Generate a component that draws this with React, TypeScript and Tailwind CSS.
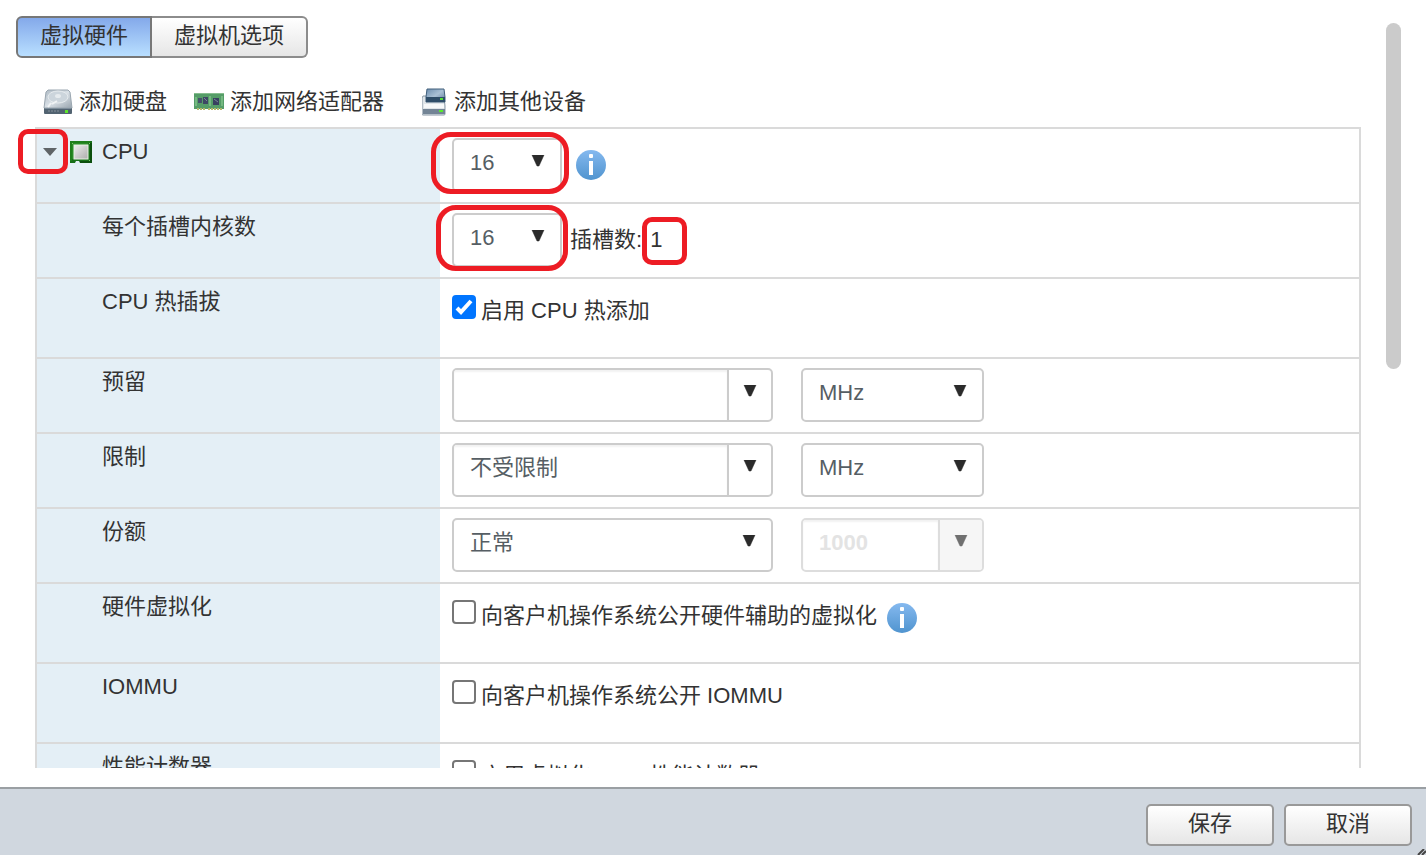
import React, { PropsWithChildren } from 'react';

interface MarkProps {
  className: string;
}

interface RowProps {
  label: string;
  icon?: React.ReactNode;
  htmlFor?: string;
  tall?: boolean;
}

interface SelectProps {
  id?: string;
  label?: string;
  options: string[];
  className: string;
}

interface ComboProps {
  id?: string;
  label?: string;
  value?: string;
  disabled?: boolean;
  className: string;
}

interface CheckProps {
  id: string;
  label: string;
  checked?: boolean;
}

const DiskIcon = () => (
  <svg width="30" height="28" viewBox="0 0 30 28" aria-hidden="true">
    <defs>
      <linearGradient id="diskTop" x1="0" y1="0" x2="1" y2="1">
        <stop offset="0" stopColor="#aebac4" />
        <stop offset="0.5" stopColor="#d9e0e6" />
        <stop offset="1" stopColor="#98a4ae" />
      </linearGradient>
    </defs>
    <path d="M5 2h20l2 2 2 16H1L3 4z" fill="url(#diskTop)" stroke="#9aa6b0" />
    <ellipse cx="15" cy="9" rx="10" ry="6" fill="#ccd5dc" stroke="#e6ebee" />
    <ellipse cx="15" cy="8" rx="3" ry="2" fill="#e6ebee" />
    <path d="M8 15l-3 4M9 16l5-3" stroke="#f0f3f5" strokeWidth="2" />
    <rect x="1" y="20" width="28" height="6" rx="1" fill="#526371" />
    <path d="M2 20.5h26" stroke="#7e8e9b" />
    <path d="M5 23h12" stroke="#6b7a86" strokeWidth="2" strokeDasharray="2 1" />
    <rect x="22" y="22" width="3" height="3" fill="#5ee42c" />
  </svg>
);

const NetworkCardIcon = () => (
  <svg width="30" height="20" viewBox="0 0 30 20" aria-hidden="true">
    <rect width="30" height="16" y="1" fill="#559d68" />
    <path d="M0 1.5h30" stroke="#86bd8e" />
    <path d="M3 17h8M14 17h15" stroke="#b3b86c" strokeWidth="2" strokeDasharray="2 1" />
    <path d="M2 5v9M16 4v10M28 4v10" stroke="#75b981" strokeWidth="2" />
    <rect x="4" y="6" width="4" height="5" fill="#45516a" />
    <rect x="9" y="5" width="5" height="7" fill="#3d4864" />
    <rect x="19" y="6" width="6" height="7" fill="#37405f" />
    <path d="M10 6l3 3M20 7l4 3" stroke="#7a849b" />
  </svg>
);

const DeviceIcon = () => (
  <svg width="24" height="28" viewBox="0 0 24 28" aria-hidden="true">
    <defs>
      <linearGradient id="deviceTop" x1="0" y1="0" x2="1" y2="1">
        <stop offset="0" stopColor="#6d8eaf" />
        <stop offset="0.5" stopColor="#a9c0d5" />
        <stop offset="1" stopColor="#577694" />
      </linearGradient>
    </defs>
    <path d="M1 8h21l1 10v8a1 1 0 0 1-1 1H1a1 1 0 0 1-1-1V10z" fill="#dfe5e9" stroke="#8998a5" />
    <path d="M5 1h17l1 8v5H4V9z" fill="url(#deviceTop)" stroke="#405f7b" />
    <rect x="4" y="9" width="19" height="5" fill="#2e4d69" />
    <path d="M1 21h22v5H1z" fill="#738495" />
    <path d="M2 18h20" stroke="#f7f9fa" strokeWidth="4" />
    <rect x="18" y="10" width="3" height="2" fill="#56dd38" />
    <rect x="17" y="22" width="4" height="2" fill="#56ee2c" />
  </svg>
);

const CpuIcon = () => (
  <svg width="22" height="22" viewBox="0 0 22 22" aria-hidden="true">
    <defs>
      <linearGradient id="cpuDie" x1="0" y1="0" x2="1" y2="1">
        <stop offset="0" stopColor="#eeeeee" />
        <stop offset="1" stopColor="#adadad" />
      </linearGradient>
    </defs>
    <path d="M0 0h22v22H10l-1-2H6l-1 2H0z" fill="#176f18" />
    <path d="M1 20V1h19" fill="none" stroke="#1f7f1b" strokeWidth="2" />
    <path d="M21 2v19H10" fill="none" stroke="#0b4f0d" strokeWidth="2" />
    <path d="M3 18V3h15" fill="none" stroke="#3fa836" />
    <rect x="4" y="4" width="14" height="14" fill="url(#cpuDie)" stroke="#e8f1e5" />
    <path d="M2 2h1v1H2zM19 2h1v1h-1zM19 19h1v1h-1z" fill="#7ecb6c" />
  </svg>
);

const InfoIcon = () => (
  <svg className="shrink-0" width="30" height="30" viewBox="0 0 30 30" role="img" aria-label="信息">
    <defs>
      <linearGradient id="infoFill" x1="0" y1="0" x2="0" y2="1">
        <stop offset="0" stopColor="#85b9ef" />
        <stop offset="1" stopColor="#5094cf" />
      </linearGradient>
    </defs>
    <circle cx="15" cy="15" r="15" fill="url(#infoFill)" />
    <rect x="13" y="4" width="4" height="4" rx="1" fill="#fff" />
    <rect x="13" y="11" width="4" height="14" fill="#fff" />
  </svg>
);

const Arrow = () => (
  <svg width="14" height="12" viewBox="0 0 14 12" aria-hidden="true">
    <path d="M1 0h12L8 11H6z" fill="currentColor" stroke="currentColor" strokeWidth="0.5" />
  </svg>
);

// red highlight drawn over the control it belongs to
const Mark = ({ className }: MarkProps) => (
  <span
    className={`pointer-events-none absolute z-10 border-5 border-[#ed1c24] ${className}`}
  />
);

const Select = ({ id, label, options, className }: SelectProps) => (
  <div className={`relative h-[54px] ${className}`}>
    <select
      id={id}
      aria-label={label}
      className="h-full w-full appearance-none rounded-[5px] border-2 border-[#cccccc] bg-white pb-1 pl-4 text-[22px] text-[#565e64]"
    >
      {options.map((option) => (
        <option key={option}>{option}</option>
      ))}
    </select>
    <span className="pointer-events-none absolute top-[17px] right-[17px] text-[#2b2b2b]">
      <Arrow />
    </span>
  </div>
);

const Combo = ({ id, label, value, disabled, className }: ComboProps) => (
  <div
    className={`flex h-[54px] overflow-hidden rounded-[5px] border-2 bg-white ${
      disabled ? 'border-[#dddddd]' : 'border-[#cccccc]'
    } ${className}`}
  >
    <input
      id={id}
      aria-label={label}
      type="text"
      defaultValue={value}
      disabled={disabled}
      className="min-w-0 flex-1 pb-1 pl-4 text-[#565e64] shadow-[inset_0_2px_2px_#f2f2f2] disabled:font-bold disabled:text-[#e3e3e3]"
    />
    <button
      type="button"
      aria-label="展开"
      disabled={disabled}
      className="flex w-11 justify-center border-l-2 border-[#cccccc] pt-[15px] text-[#2b2b2b] disabled:border-[#dddddd] disabled:bg-[#f6f6f6] disabled:text-[#707070]"
    >
      <Arrow />
    </button>
  </div>
);

const Check = ({ id, label, checked }: CheckProps) => (
  <div className="flex items-start gap-[5px]">
    <span className="relative size-6 shrink-0">
      <input
        id={id}
        type="checkbox"
        defaultChecked={checked}
        className="peer block size-6 appearance-none rounded-[4px] border-2 border-[#767676] bg-white checked:border-[#0075ff] checked:bg-[#0075ff]"
      />
      <svg
        className="pointer-events-none absolute inset-0 hidden peer-checked:block"
        width="24"
        height="24"
        viewBox="0 0 24 24"
        aria-hidden="true"
      >
        <path d="M5 13l4 4L19 6" fill="none" stroke="#fff" strokeWidth="4" />
      </svg>
    </span>
    <label htmlFor={id} className="mt-0.5">
      {label}
    </label>
  </div>
);

const Row = ({
  label,
  icon,
  htmlFor,
  tall,
  children,
}: PropsWithChildren<RowProps>) => (
  <div
    className={`flex border-t-2 border-[#dadada] ${tall ? 'min-h-20' : 'min-h-[75px]'}`}
  >
    <div className="flex w-[403px] shrink-0 items-start bg-[#e4eff6] pt-[9px]">
      <div className="flex w-[65px] shrink-0 items-center">{icon}</div>
      {htmlFor ? <label htmlFor={htmlFor}>{label}</label> : <span>{label}</span>}
    </div>
    <div
      className={`flex flex-1 items-start pl-3 ${tall ? 'pt-4' : 'pt-[9px]'}`}
    >
      {children}
    </div>
  </div>
);

const ToolButton = ({ children }: PropsWithChildren) => (
  <button type="button" className="flex items-center gap-1.5">
    {children}
  </button>
);

const FooterButton = ({ children }: PropsWithChildren) => (
  <button
    type="button"
    className="h-[42px] w-32 rounded-[5px] border-2 border-[#999999] bg-linear-to-b from-white to-[#e6e6e6] pb-0.5"
  >
    {children}
  </button>
);

const App = () => {
  return (
    <div className="flex h-screen flex-col bg-white font-['Liberation_Sans','Noto_Sans_CJK_SC',sans-serif] text-[22px] leading-7 text-[#333333]">
      <main className="flex min-h-0 flex-1 pb-[19px]">
        <div className="min-w-0 flex-1 overflow-y-auto pt-4 [scrollbar-width:none]">
          <div className="flex pl-4" role="tablist">
            <button
              type="button"
              role="tab"
              aria-selected="true"
              className="h-[42px] w-[136px] rounded-l-[6px] border-2 border-[#777777] bg-linear-to-b from-[#84a9ea] to-[#b9dfff] pb-0.5"
            >
              虚拟硬件
            </button>
            <button
              type="button"
              role="tab"
              aria-selected="false"
              className="h-[42px] w-[156px] rounded-r-[6px] border-2 border-l-0 border-[#8c8c8c] bg-linear-to-b from-white to-[#e6e6e6] pb-0.5"
            >
              虚拟机选项
            </button>
          </div>

          <div className="flex pt-[30px] pb-[11px] pl-[43px]">
            <div className="flex gap-[27px]">
              <ToolButton>
                <DiskIcon />
                添加硬盘
              </ToolButton>
              <ToolButton>
                <NetworkCardIcon />
                添加网络适配器
              </ToolButton>
            </div>
            <div className="ml-[38px]">
              <ToolButton>
                <DeviceIcon />
                <span className="pl-0.5">添加其他设备</span>
              </ToolButton>
            </div>
          </div>

          <div className="ml-[35px] border-x-2 border-[#dadada]">
            <Row
              label="CPU"
              htmlFor="cpu"
              icon={
                <>
                  <button
                    type="button"
                    aria-label="折叠"
                    className="relative flex h-7 w-[33px] items-center pl-1.5"
                  >
                    <svg width="14" height="8" viewBox="0 0 14 8" aria-hidden="true">
                      <path d="M0 0h14L7 8z" fill="#5f6467" />
                    </svg>
                    <Mark className="-top-[9px] -left-[19px] h-[45px] w-[50px] rounded-[10px]" />
                  </button>
                  <CpuIcon />
                </>
              }
            >
              <div className="flex items-center gap-3.5">
                <div className="relative">
                  <Select id="cpu" options={['16', '8', '4', '2', '1']} className="w-[110px]" />
                  <Mark className="-top-1.5 -right-[7px] -left-[21px] h-[62px] rounded-[20px]" />
                </div>
                <InfoIcon />
              </div>
            </Row>

            <Row label="每个插槽内核数" htmlFor="cores">
              <div className="flex items-center gap-2">
                <div className="relative">
                  <Select id="cores" options={['16', '8', '4', '2', '1']} className="w-[110px]" />
                  <Mark className="-top-2 -right-1.5 -left-4 h-[66px] rounded-[20px]" />
                </div>
                <span>插槽数:</span>
                <span className="relative">
                  1
                  <Mark className="-top-[9px] -left-2 h-12 w-[45px] rounded-[10px]" />
                </span>
              </div>
            </Row>

            <Row label="CPU 热插拔" tall>
              <Check id="hotplug" label="启用 CPU 热添加" checked />
            </Row>

            <Row label="预留" htmlFor="reservation">
              <div className="flex gap-7">
                <Combo id="reservation" className="w-[321px]" />
                <Select label="预留单位" options={['MHz', 'GHz']} className="w-[183px]" />
              </div>
            </Row>

            <Row label="限制" htmlFor="limit">
              <div className="flex gap-7">
                <Combo id="limit" value="不受限制" className="w-[321px]" />
                <Select label="限制单位" options={['MHz', 'GHz']} className="w-[183px]" />
              </div>
            </Row>

            <Row label="份额" htmlFor="shares">
              <div className="flex gap-7">
                <Select id="shares" options={['正常', '低', '高', '自定义']} className="w-[321px]" />
                <Combo label="份额值" value="1000" disabled className="w-[183px]" />
              </div>
            </Row>

            <Row label="硬件虚拟化" tall>
              <div className="flex items-start gap-2.5">
                <Check id="hv" label="向客户机操作系统公开硬件辅助的虚拟化" />
                <div className="pt-[3px]">
                  <InfoIcon />
                </div>
              </div>
            </Row>

            <Row label="IOMMU" tall>
              <Check id="iommu" label="向客户机操作系统公开 IOMMU" />
            </Row>

            <Row label="性能计数器" tall>
              <Check id="counters" label="启用虚拟化 CPU 性能计数器" />
            </Row>
          </div>
        </div>

        <div className="w-[65px] shrink-0 pt-[23px] pl-[25px]">
          <div className="h-[346px] w-[15px] rounded-full bg-[#cbcbcb]" />
        </div>
      </main>

      <footer className="relative flex justify-end gap-2.5 border-t-2 border-[#9a9fa3] bg-[#d0d7df] pt-[15px] pr-3.5 pb-[9px]">
        <FooterButton>保存</FooterButton>
        <FooterButton>取消</FooterButton>
        <svg
          className="absolute right-0 bottom-0"
          width="9"
          height="6"
          viewBox="0 0 9 6"
          aria-hidden="true"
        >
          <path d="M1 6l6-6M5 6l4-4" stroke="#444" strokeWidth="2" />
        </svg>
      </footer>
    </div>
  );
};

export default App;
